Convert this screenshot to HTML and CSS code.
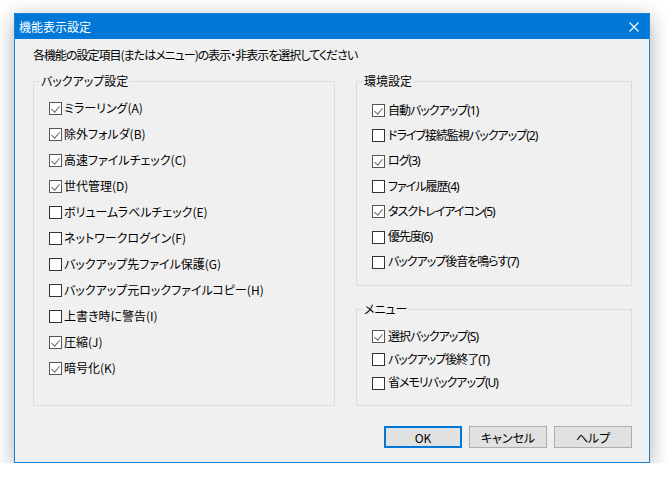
FILE: index.html
```html
<!DOCTYPE html>
<html lang="ja">
<head>
<meta charset="utf-8">
<title>機能表示設定</title>
<link rel="stylesheet" href="styles.css">
</head>
<body>
<div class="window">
  <div class="titlebar">
    <span class="title">機能表示設定</span>
    <span class="close">
      <svg width="10" height="10" viewBox="0 0 10 10"><path d="M0.5 0.5L9.5 9.5M9.5 0.5L0.5 9.5" stroke="#fff" stroke-width="1.1" fill="none"/></svg>
    </span>
  </div>
  <div class="content">
    <p class="intro">各機能の設定項目(またはメニュー)の表示・非表示を選択してください</p>
    <div class="columns">
      <fieldset class="group group-left">
        <legend>バックアップ設定</legend>
        <div class="item"><span class="cb on"></span><span class="lbl">ミラーリング(A)</span></div>
        <div class="item"><span class="cb on"></span><span class="lbl">除外フォルダ(B)</span></div>
        <div class="item"><span class="cb on"></span><span class="lbl">高速ファイルチェック(C)</span></div>
        <div class="item"><span class="cb on"></span><span class="lbl">世代管理(D)</span></div>
        <div class="item"><span class="cb"></span><span class="lbl">ボリュームラベルチェック(E)</span></div>
        <div class="item"><span class="cb"></span><span class="lbl">ネットワークログイン(F)</span></div>
        <div class="item"><span class="cb"></span><span class="lbl">バックアップ先ファイル保護(G)</span></div>
        <div class="item"><span class="cb"></span><span class="lbl">バックアップ元ロックファイルコピー(H)</span></div>
        <div class="item"><span class="cb"></span><span class="lbl">上書き時に警告(I)</span></div>
        <div class="item"><span class="cb on"></span><span class="lbl">圧縮(J)</span></div>
        <div class="item"><span class="cb on"></span><span class="lbl">暗号化(K)</span></div>
      </fieldset>
      <div class="right-col">
        <fieldset class="group group-env">
          <legend>環境設定</legend>
          <div class="item"><span class="cb on"></span><span class="lbl">自動バックアップ(1)</span></div>
          <div class="item"><span class="cb"></span><span class="lbl">ドライブ接続監視バックアップ(2)</span></div>
          <div class="item"><span class="cb on"></span><span class="lbl">ログ(3)</span></div>
          <div class="item"><span class="cb"></span><span class="lbl">ファイル履歴(4)</span></div>
          <div class="item"><span class="cb on"></span><span class="lbl">タスクトレイアイコン(5)</span></div>
          <div class="item"><span class="cb"></span><span class="lbl">優先度(6)</span></div>
          <div class="item"><span class="cb"></span><span class="lbl">バックアップ後音を鳴らす(7)</span></div>
        </fieldset>
        <fieldset class="group group-menu">
          <legend>メニュー</legend>
          <div class="item"><span class="cb on"></span><span class="lbl">選択バックアップ(S)</span></div>
          <div class="item"><span class="cb"></span><span class="lbl">バックアップ後終了(T)</span></div>
          <div class="item"><span class="cb"></span><span class="lbl">省メモリバックアップ(U)</span></div>
        </fieldset>
      </div>
    </div>
    <div class="buttons">
      <button class="btn btn-default">OK</button>
      <button class="btn">キャンセル</button>
      <button class="btn">ヘルプ</button>
    </div>
  </div>
</div>
</body>
</html>
```

FILE: styles.css
```css
html, body {
  margin: 0;
  padding: 0;
  background: #ffffff;
}
body {
  font-family: "Noto Sans CJK JP", sans-serif;
  font-size: 12px;
  color: #000;
  padding: 13px 0 0 14px;
  font-feature-settings: "palt" 1;
}
.window {
  width: 636px;
  height: 450px;
  box-sizing: border-box;
  border: 1px solid #1883d7;
  background: #f0f0f0;
  box-shadow: 0 5px 20px rgba(0, 0, 0, 0.32);
  display: flex;
  flex-direction: column;
}
.titlebar {
  height: 25px;
  background: #0078d7;
  color: #fff;
  display: flex;
  align-items: center;
  justify-content: space-between;
  padding: 0 10px 0 4px;
  flex: none;
}
.title {
  font-size: 12px;
  line-height: 16px;
}
.close {
  display: flex;
  width: 10px;
  height: 10px;
}
.content {
  flex: 1;
  display: flex;
  flex-direction: column;
  padding: 8px 17px 14px 18px;
}
.intro {
  margin: 0 0 10px 0;
  line-height: 16px;
  font-size: 12px;
  letter-spacing: -1px;
}
.columns {
  display: grid;
  grid-template-columns: 302px 276px;
  column-gap: 21px;
  height: 333px;
}
.right-col {
  display: flex;
  flex-direction: column;
  justify-content: space-between;
}
.group {
  margin: 0;
  border: 1px solid #dcdcdc;
  padding: 0 0 0 15px;
  min-width: 0;
}
.group legend {
  padding: 0 1px;
  margin-left: -9px;
  line-height: 16px;
}
.group-left {
  padding-top: 6px;
}
.group-left .item {
  height: 26px;
}
.group-env {
  padding-top: 9px;
  height: 213px;
  box-sizing: border-box;
}
.group-env .item {
  height: 25.3px;
}
.group-menu {
  padding-top: 8px;
  height: 105px;
  box-sizing: border-box;
}
.group-menu .item {
  height: 23.3px;
}
.item {
  display: flex;
  align-items: center;
}
.cb {
  width: 13px;
  height: 13px;
  box-sizing: border-box;
  border: 1px solid #333;
  background: #fff;
  flex: none;
  position: relative;
}
.cb.on {
  border-color: #555;
}
.cb.on::after {
  content: "";
  position: absolute;
  left: 3px;
  top: 1px;
  width: 4px;
  height: 7px;
  border-right: 1.5px solid #666;
  border-bottom: 1.5px solid #666;
  transform: rotate(40deg);
}
.lbl {
  margin-left: 2px;
  line-height: 16px;
  white-space: nowrap;
}
.right-col .lbl {
  font-family: "Noto Sans", "Noto Sans CJK JP", sans-serif;
  font-size: 12px;
  letter-spacing: -1px;
  margin-left: 3px;
}
.buttons {
  display: flex;
  justify-content: flex-end;
  gap: 7px;
  margin-top: 20px;
}
.btn {
  width: 78px;
  height: 22px;
  box-sizing: border-box;
  background: #e1e1e1;
  border: 1px solid #adadad;
  font-family: "Noto Sans CJK JP", sans-serif;
  font-feature-settings: "palt" 1;
  font-size: 12px;
  color: #000;
  padding: 0;
}
.btn-default {
  border: 2px solid #0078d7;
}
```
